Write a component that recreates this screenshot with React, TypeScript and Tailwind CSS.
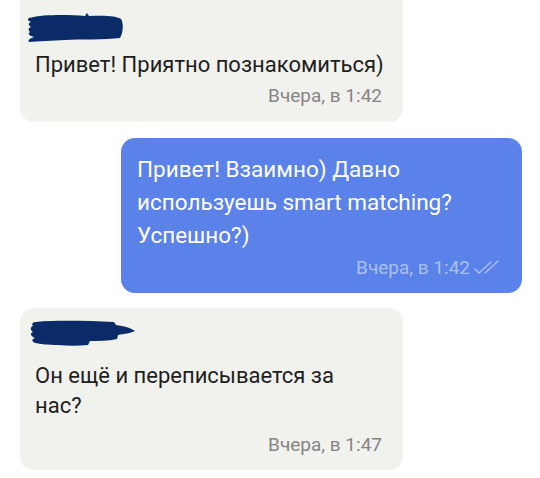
import React from 'react'

const font = { fontFamily: 'Roboto, "Noto Sans", sans-serif' }

// hand-drawn marker blot hiding the name
function Scribble({ variant }: { variant: 1 | 2 }) {
  if (variant === 1) {
    return (
      <svg width="100" height="32" viewBox="0 0 100 32" className="shrink-0">
        <path
          d="M4 7 C20 3 45 4 60 5 L62 2 L64 5 C80 4 92 5 96 8 C99 13 98 22 95 27 C80 29 55 28 40 29 C28 30 12 30 4 31 C2 29 6 27 9 26 C5 25 2 23 5 21 C3 19 3 17 6 16 C3 14 3 12 6 11 C3 10 2 8 4 7 Z"
          fill="#0b2a68"
        />
      </svg>
    )
  }
  return (
    <svg width="110" height="28" viewBox="0 0 110 28" className="shrink-0">
      <path
        d="M8 3 C30 1 60 2 86 3 L88 6 C96 7 103 9 107 12 C103 14 96 15 90 16 L89 20 C80 22 70 22 62 22 L60 26 C50 27 40 27 30 26 C20 26 12 25 7 24 C3 22 4 20 7 19 C2 17 2 14 5 13 C2 11 2 8 5 7 C3 5 5 3 8 3 Z"
        fill="#0b2a68"
      />
    </svg>
  )
}

function Checks() {
  return (
    <svg width="32" height="16" viewBox="0 0 32 16" fill="none" stroke="#a9bff5" strokeWidth="1.3" strokeLinecap="round">
      <path d="M2 9 L6 13 L18 2" />
      <path d="M12 13 L25 1" />
    </svg>
  )
}

export default function App() {
  return (
    <div className="w-[540px] h-[478px] overflow-hidden bg-white" style={font}>
      <div className="flex flex-col pl-[20px]">
        {/* incoming 1 */}
        <div className="w-[383px] h-[134px] -mt-[12px] rounded-[14px] bg-[#f1f1ed] pl-[5px] pr-[21px] pt-[23px] flex flex-col">
          <Scribble variant={1} />
          <div className="pl-[10px] mt-[8px] whitespace-nowrap text-[22px] leading-[28px] text-[#1e1e1e]">
            Привет! Приятно познакомиться)
          </div>
          <div className="self-end mt-[6px] text-[19px] leading-[22px] text-[#858585]">Вчера, в 1:42</div>
        </div>

        {/* outgoing */}
        <div className="self-start ml-[101px] mt-[16px] w-[401px] h-[155px] rounded-[14px] bg-[#5b82e8] pl-[16px] pr-[17px] pt-[15px] flex flex-col">
          <div className="whitespace-nowrap text-[22.5px] leading-[33px] text-white">
            Привет! Взаимно) Давно
            <br />
            используешь smart matching?
            <br />
            Успешно?)
          </div>
          <div className="self-end mt-[5px] flex items-center gap-[3px] text-[19px] leading-[22px] text-[#aac0f5]">
            Вчера, в 1:42
            <Checks />
          </div>
        </div>

        {/* incoming 2 */}
        <div className="mt-[15px] w-[383px] h-[162px] rounded-[14px] bg-[#f1f1ed] pl-[8px] pr-[21px] pt-[11px] flex flex-col">
          <Scribble variant={2} />
          <div className="pl-[7px] mt-[14px] whitespace-nowrap text-[22px] leading-[30px] text-[#1e1e1e]">
            Он ещё и переписывается за
            <br />
            нас?
          </div>
          <div className="self-end mt-[13px] text-[19px] leading-[22px] text-[#858585]">Вчера, в 1:47</div>
        </div>
      </div>
    </div>
  )
}
